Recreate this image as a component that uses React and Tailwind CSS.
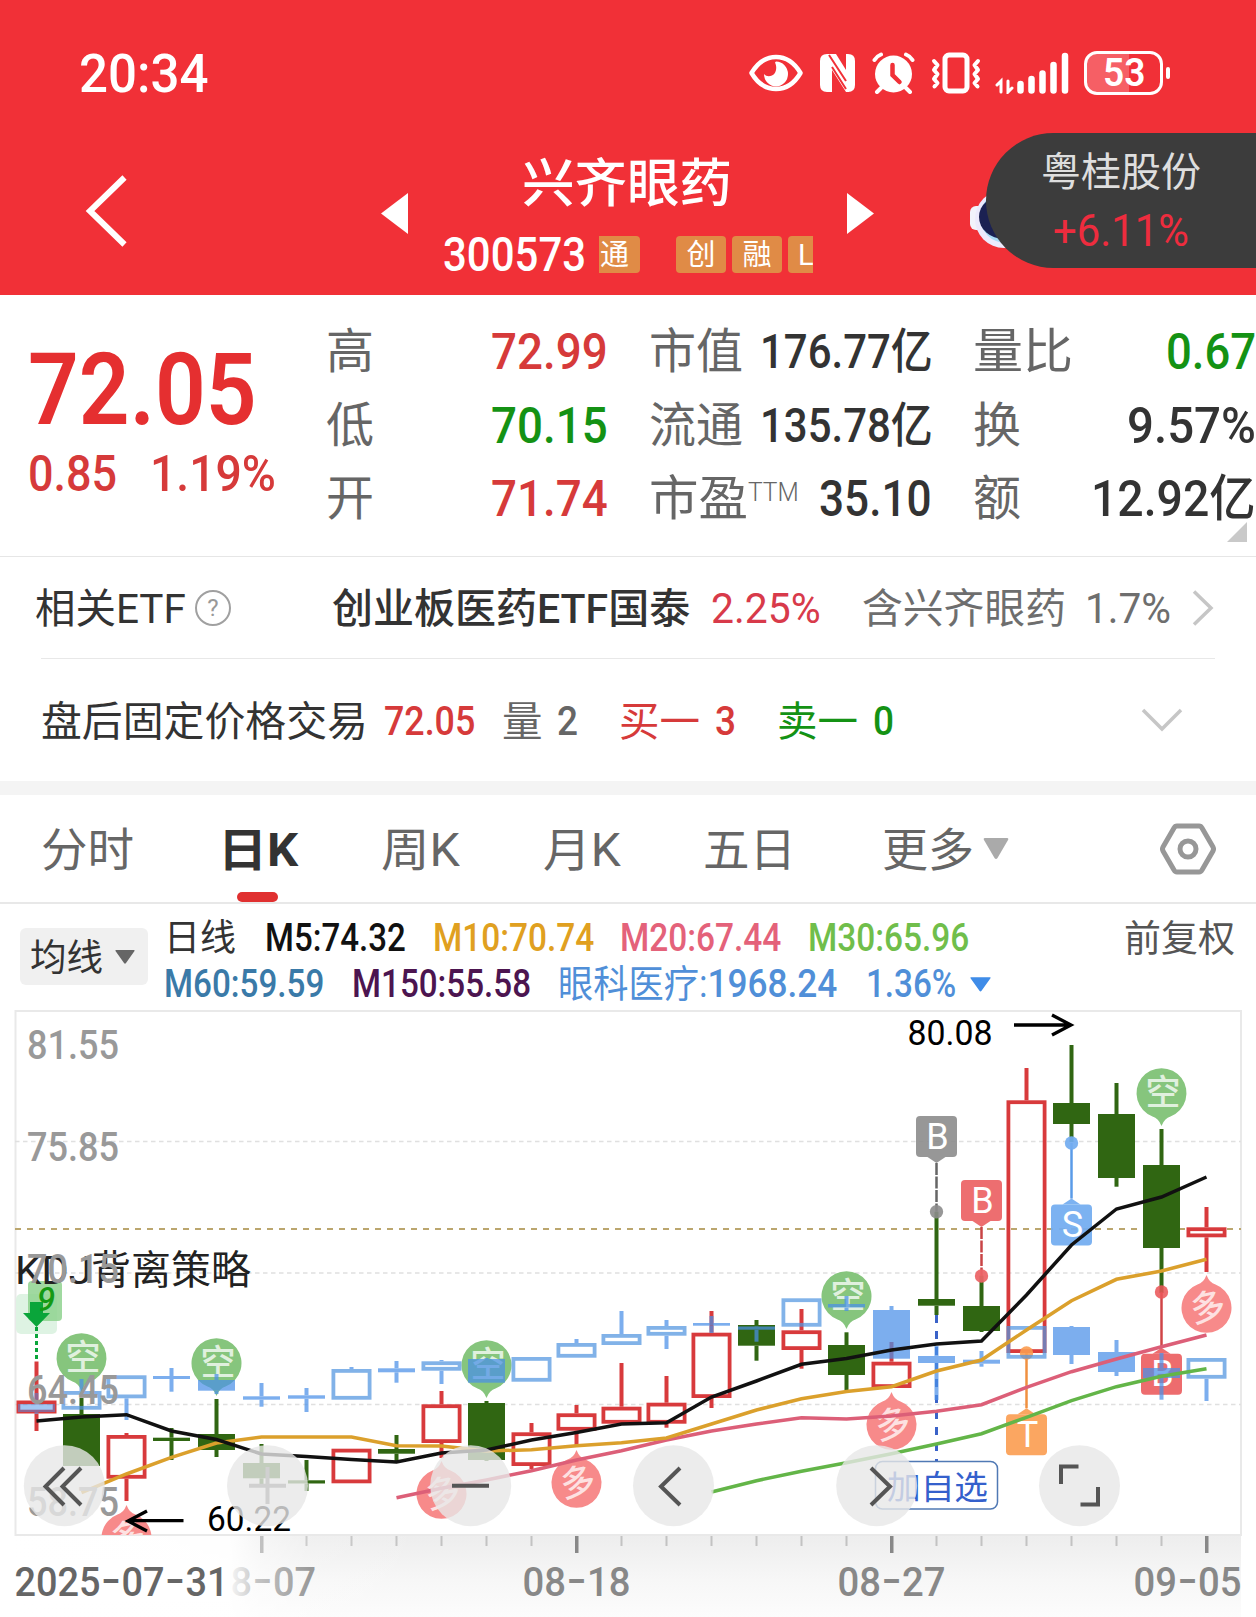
import React, { useLayoutEffect, useRef, useState } from 'react';

const FIRST_X = 36.5;
const STEP = 45;
const xAt = (i) => FIRST_X + i * STEP;

// kind, high, body top, body bottom, low (up = hollow, down = filled)
const CANDLES = [
  ['up', 1361.5, 1400.5, 1413.5, 1431],
  ['down', 1398, 1414, 1466, 1466],
  ['up', 1433, 1435, 1478.7, 1501],
  ['down', 1428, 1437.7, 1441, 1460],
  ['down', 1399, 1434, 1450, 1457],
  ['down', 1444, 1463, 1478.3, 1485],
  ['down', 1460, 1480.3, 1483.5, 1491],
  ['up', 1448.7, 1448.7, 1483.3, 1483.3],
  ['down', 1435, 1449, 1453.7, 1463],
  ['up', 1391, 1404.3, 1443, 1458],
  ['down', 1401, 1403, 1460, 1461],
  ['up', 1423, 1432.3, 1466, 1469],
  ['up', 1405, 1413.3, 1430.7, 1445],
  ['up', 1363, 1406.7, 1423.7, 1423.7],
  ['up', 1376, 1402.7, 1423.7, 1427.7],
  ['up', 1311, 1332.7, 1398, 1408],
  ['down', 1320, 1325, 1345.7, 1360.7],
  ['up', 1309, 1330.3, 1350, 1368.7],
  ['down', 1332.3, 1345, 1375, 1390],
  ['up', 1342, 1361.7, 1388, 1388],
  ['down', 1211.7, 1299, 1305.7, 1315],
  ['down', 1275.7, 1306, 1331, 1332],
  ['up', 1068, 1100.3, 1353, 1353],
  ['down', 1045, 1103, 1124, 1142],
  ['down', 1083, 1114, 1178, 1186.7],
  ['down', 1129, 1165, 1248, 1293],
  ['up', 1207, 1227.3, 1237.3, 1272],
];

// Sector index drawn over the main candles
const SECTOR = [
  ['down', 1393, 1404, 1412, 1414],
  ['up', 1379, 1391, 1409.7, 1409.7],
  ['up', 1375.3, 1375.3, 1398.3, 1420],
  ['down', 1368, 1376, 1379, 1391.7],
  ['down', 1374, 1380, 1390.7, 1394],
  ['down', 1383, 1396.3, 1399.7, 1406.7],
  ['down', 1388, 1395.3, 1398.7, 1412],
  ['up', 1367, 1369, 1399.7, 1399.7],
  ['down', 1361, 1368.3, 1372.3, 1382.7],
  ['up', 1360, 1361.3, 1370.7, 1384],
  ['down', 1358, 1359, 1382.7, 1382.7],
  ['up', 1357, 1357, 1381.7, 1381.7],
  ['up', 1339, 1343, 1357.7, 1357.7],
  ['up', 1311, 1334, 1345, 1345],
  ['up', 1320, 1326, 1335.7, 1349],
  ['down', 1316, 1323, 1325.7, 1333],
  ['down', 1326, 1326.5, 1329.7, 1341.7],
  ['up', 1298.3, 1298.3, 1326.7, 1326.7],
  ['down', 1296, 1304, 1307.5, 1311],
  ['down', 1306, 1310, 1358.7, 1358.7],
  ['down', 1346, 1356, 1363, 1400],
  ['down', 1351, 1359.7, 1363.7, 1366.7],
  ['up', 1326, 1326, 1358.7, 1358.7],
  ['down', 1326, 1327, 1355, 1364],
  ['down', 1340, 1352, 1372, 1376],
  ['down', 1353, 1368, 1378, 1399.7],
  ['up', 1358, 1358, 1378.7, 1401],
];

const AVERAGES = [
  { color: '#63b548', start: 15, ys: [1492, 1480.7, 1471.3, 1462.7, 1453.7, 1444, 1433.7, 1417.3, 1400.7, 1386.7, 1376.3, 1368.7] },
  { color: '#dc5f78', start: 8, ys: [1497.7, 1488.3, 1480, 1470.7, 1460, 1450.7, 1440, 1431, 1424, 1417.7, 1419, 1416, 1411.3, 1404.7, 1387.3, 1371.7, 1359, 1346.7, 1335] },
  { color: '#dba02c', start: 1, ys: [1492.7, 1474, 1457.3, 1443, 1437, 1437, 1437, 1445.7, 1446, 1451, 1449.7, 1445.7, 1442.7, 1438, 1424, 1410, 1398.7, 1391.5, 1386.7, 1371, 1360, 1330, 1300.7, 1279.3, 1271, 1259.3] },
  { color: '#111111', start: 0, ys: [1421, 1417, 1414.7, 1431, 1439.5, 1454, 1456.5, 1459.5, 1462, 1453, 1450, 1440, 1432.5, 1424, 1422.7, 1397, 1381, 1364.3, 1358.5, 1350, 1344, 1341, 1295, 1245, 1209, 1197, 1177] },
];

const PRICE_LABELS = [
  ['81.55', 1059],
  ['75.85', 1160.7],
  ['70.15', 1282.5],
  ['64.45', 1403.5],
  ['58.75', 1515.5],
];

const SHORT_PINS = [[1, 1358], [4, 1363], [10, 1365], [18, 1296], [25, 1093]];
const LONG_PINS = [[2, 1538], [9, 1494], [12, 1483], [19, 1425], [26, 1308]];

// Squeezes its text horizontally so that it fills the width given by the class
function Fit({ className = '', children }) {
  const outer = useRef(null);
  const inner = useRef(null);
  const [scale, setScale] = useState(1);

  useLayoutEffect(() => {
    setScale(outer.current.clientWidth / inner.current.offsetWidth);
  }, [children]);

  return (
    <span ref={outer} className={`block shrink-0 ${className}`}>
      <span ref={inner} className="inline-block origin-left whitespace-nowrap" style={{ transform: `scaleX(${scale})` }}>
        {children}
      </span>
    </span>
  );
}

function StatusBar() {
  return (
    <div className="flex h-[146px] items-center pl-[79px] text-white">
      <Fit className="mt-[2px] w-[129px] text-[53px] font-medium">20:34</Fit>
      {/* eye */}
      <svg className="ml-[541px] shrink-0" width="54" height="38" viewBox="0 0 54 38" fill="none">
        <path d="M2.500 19C9 8 17 3 27 3s18 5 24.500 16C45 30 37 35 27 35S9 30 2.500 19z" stroke="currentColor" strokeWidth="4.500" strokeLinejoin="round" />
        <path d="M27 7.500a12 12.500 0 1 1-12 12.500c3 3.500 8 2.500 10.500-.5 2.500-3.500 2-8 .5-11z" fill="currentColor" />
      </svg>
      {/* nfc */}
      <svg className="ml-4 shrink-0" width="37" height="40" viewBox="0 0 37 40">
        <path d="M8 1h3v38H8q-7 0-7-7V8q0-7 7-7zM27 1h2q7 0 7 7v24q0 7-7 7l-2-3z" fill="currentColor" />
        <path d="M10 1h7l10 16V2l3 4v33h-3L13 17v22h-3z" fill="currentColor" />
        <path d="M10 2l17 26M13 14l14 22" stroke="#f13037" strokeWidth="2" />
      </svg>
      {/* alarm */}
      <svg className="ml-4 shrink-0" width="43" height="42" viewBox="0 0 43 42" fill="none" stroke="currentColor" strokeLinecap="round">
        <circle cx="21.500" cy="22" r="18.500" fill="currentColor" stroke="none" />
        <path d="M2.500 8Q5 4 9 2.500M40.500 8Q38 4 34 2.500M9 36l-4 4M34 36l4 4" strokeWidth="4" />
        <path d="M20.500 13v10l7 7" stroke="#f13037" strokeWidth="4.500" />
      </svg>
      {/* vibrate */}
      <svg className="ml-4 shrink-0" width="50" height="42" viewBox="0 0 50 42" fill="none" stroke="currentColor" strokeLinecap="round" strokeLinejoin="round">
        <rect x="14" y="3" width="22" height="36" rx="4" strokeWidth="5" />
        <path d="M3 9l3.500 4L3 18l3.500 4L3 27l3.500 4-3 3.500M47 9l-3.500 4 3.500 5-3.500 4 3.500 5-3.500 4 3 3.500" strokeWidth="4" />
      </svg>
      {/* signal */}
      <svg className="ml-[14px] shrink-0" width="74" height="42" viewBox="0 0 74 42" fill="none" stroke="currentColor" strokeLinecap="round">
        <path d="M2 33l4-4v11M17 36l-4 4V29" strokeWidth="3" />
        <path d="M25.500 32v6.500M36.500 27v11.500M47.500 21.500v17M58.500 13v25.500M70 4v34.500" strokeWidth="6.500" />
      </svg>
      <div className="ml-[15px] flex h-[44px] w-[79px] shrink-0 items-center justify-center rounded-[13px] border-[3px] border-white bg-linear-to-r from-[#f65f65] from-58% to-[#f13037] to-58%">
        <Fit className="w-[42px] text-[38px] font-semibold">53</Fit>
      </div>
      <div className="ml-[3px] h-3 w-1 rounded-full bg-white" />
    </div>
  );
}

function TitleBar() {
  return (
    <div className="relative flex h-[149px] items-start text-white">
      <svg className="mt-[27px] ml-[85px] shrink-0" width="44" height="76" viewBox="0 0 44 76" fill="none">
        <path d="M39.500 4.500L5 38l34.500 33.500" stroke="currentColor" strokeWidth="6" />
      </svg>
      <svg className="mt-[47px] ml-[252px] shrink-0" width="27" height="41" viewBox="0 0 27 41">
        <path d="M27 0v41L0 20.500z" fill="currentColor" />
      </svg>
      <div className="ml-[35px] w-[370px] shrink-0">
        <div className="mt-[13px] pl-[79px] text-[52px] font-medium">
          <Fit className="w-[210px]">兴齐眼药</Fit>
        </div>
        <div className="mt-[25px] flex h-[37px] items-center text-[29px]">
          <Fit className="w-[143px] text-[49px] font-medium">300573</Fit>
          <span className="ml-[13px] flex h-full w-[41px] items-center overflow-hidden rounded-r-[4px] bg-[#e08b46] pt-[2px] pl-px">通</span>
          <span className="ml-[36px] flex h-full w-[50px] shrink-0 items-center justify-center rounded-[4px] bg-[#e08b46] pt-[2px]">创</span>
          <span className="ml-[6px] flex h-full w-[50px] shrink-0 items-center justify-center rounded-[4px] bg-[#e08b46] pt-[2px]">融</span>
          <span className="ml-[6px] flex h-full w-[25px] shrink-0 items-center overflow-hidden rounded-l-[4px] bg-[#e08b46] pt-[2px] pl-[10px]">L</span>
        </div>
      </div>
      <svg className="mt-[47px] ml-[34px] shrink-0" width="27" height="41" viewBox="0 0 27 41">
        <path d="M0 0v41l27-20.500z" fill="currentColor" />
      </svg>
      {/* assistant robot, half hidden by the floating quote */}
      <svg className="mt-[40px] ml-[96px] shrink-0" width="60" height="64" viewBox="0 0 60 64">
        <rect x="0" y="20" width="14" height="24" rx="6" fill="#f2f3fb" />
        <circle cx="34" cy="33" r="29" fill="#eceafc" />
        <circle cx="36" cy="31" r="26" fill="#a9dcf5" />
        <ellipse cx="34" cy="31" rx="25" ry="22" fill="#1b2152" />
      </svg>
      <div className="absolute top-[-13px] right-0 h-[135px] w-[270px] rounded-l-full bg-[#3c3c3c]">
        <Fit className="mt-[20px] ml-[55px] w-[160px] text-[40px] text-[#dedede]">粤桂股份</Fit>
        <Fit className="mt-[16px] ml-[67px] w-[136px] text-[44px] text-[#ee2c3e]">+6.11%</Fit>
      </div>
    </div>
  );
}

function Quote() {
  return (
    <div className="relative flex h-[262px] border-b border-[#e6e6e6] text-[50px] text-[#333]">
      <div className="w-[326px] shrink-0 pl-[28px] text-[#e52f30]">
        <Fit className="mt-[44px] w-[229px] text-[101px] font-semibold">72.05</Fit>
        <div className="mt-[9px] flex text-[#d63a3a]">
          <Fit className="w-[89px] font-medium">0.85</Fit>
          <Fit className="ml-[33px] w-[126px] font-medium">1.19%</Fit>
        </div>
      </div>
      <div className="w-[282px] shrink-0 pt-[31px]">
        <div className="flex justify-between">
          <span className="pt-[2px] text-[48px] text-[#666]">高</span>
          <Fit className="w-[117px] pt-px font-medium text-[#d63a3a]">72.99</Fit>
        </div>
        <div className="mt-[22.500px] flex justify-between">
          <span className="pt-[2px] text-[48px] text-[#666]">低</span>
          <Fit className="w-[117px] pt-px font-medium text-[#149214]">70.15</Fit>
        </div>
        <div className="mt-[22.500px] flex justify-between">
          <span className="pt-[2px] text-[48px] text-[#666]">开</span>
          <Fit className="w-[117px] pt-px font-medium text-[#d63a3a]">71.74</Fit>
        </div>
      </div>
      <div className="ml-[41px] w-[284px] shrink-0 pt-[32px]">
        <div className="flex h-[50px] items-center justify-between">
          <Fit className="w-[94px] text-[48px] text-[#666]">市值</Fit>
          <Fit className="w-[173px] text-[48px] font-medium">176.77亿</Fit>
        </div>
        <div className="mt-[23.500px] flex h-[50px] items-center justify-between">
          <Fit className="w-[94px] text-[48px] text-[#666]">流通</Fit>
          <Fit className="w-[173px] text-[48px] font-medium">135.78亿</Fit>
        </div>
        <div className="mt-[23.500px] flex h-[50px] items-center">
          <Fit className="w-[99px] text-[48px] text-[#666]">市盈</Fit>
          <Fit className="mb-[15px] w-[51px] text-[26px] font-light text-[#666]">TTM</Fit>
          <Fit className="ml-[20px] w-[113px] font-medium">35.10</Fit>
        </div>
      </div>
      <div className="ml-[40px] w-[283px] shrink-0 pt-[31px]">
        <div className="flex justify-between">
          <Fit className="w-[100px] pt-[2px] text-[48px] text-[#666]">量比</Fit>
          <Fit className="w-[90px] pt-px font-medium text-[#149214]">0.67</Fit>
        </div>
        <div className="mt-[22.500px] flex justify-between">
          <span className="pt-[2px] text-[48px] text-[#666]">换</span>
          <Fit className="w-[129px] pt-px font-medium">9.57%</Fit>
        </div>
        <div className="mt-[22.500px] flex justify-between">
          <span className="pt-[2px] text-[48px] text-[#666]">额</span>
          <Fit className="w-[165px] pt-px font-medium">12.92亿</Fit>
        </div>
      </div>
      <svg className="absolute right-[9px] bottom-[14px]" width="20" height="20" viewBox="0 0 20 20">
        <path d="M20 0v20H0z" fill="#c9c9c9" />
      </svg>
    </div>
  );
}

function EtfRow() {
  return (
    <div className="flex h-[101px] items-center text-[41px] text-[#333]">
      <Fit className="mt-1 ml-[35px] w-[151px]">相关ETF</Fit>
      <span className="ml-[9px] flex h-[36px] w-[36px] shrink-0 items-center justify-center rounded-full border-2 border-[#a0a0a0] text-[24px] text-[#999]">?</span>
      <Fit className="mt-1 ml-[101px] w-[358px] font-medium">创业板医药ETF国泰</Fit>
      <Fit className="mt-[2px] ml-[21px] w-[110px] text-[42px] text-[#d83a4a]">2.25%</Fit>
      <Fit className="mt-1 ml-[41px] w-[204px] text-[#6e6e6e]">含兴齐眼药</Fit>
      <Fit className="mt-[2px] ml-[19px] w-[86px] text-[42px] text-[#6e6e6e]">1.7%</Fit>
      <svg className="ml-[20px] shrink-0" width="24" height="38" viewBox="0 0 24 38" fill="none">
        <path d="M3 2.500L20 19 3 35.500" stroke="#c6c6c6" strokeWidth="3.500" />
      </svg>
    </div>
  );
}

function AfterHoursRow() {
  return (
    <div className="flex h-[122px] items-center text-[40.500px] text-[#333]">
      <Fit className="mt-1 ml-[41px] w-[327px]">盘后固定价格交易</Fit>
      <Fit className="mt-[3px] ml-[16px] w-[91px] font-medium text-[#d63a3a]">72.05</Fit>
      <Fit className="mt-1 ml-[27px] w-[41px] text-[#666]">量</Fit>
      <Fit className="mt-[3px] ml-[14px] w-[21px] font-medium text-[#666]">2</Fit>
      <Fit className="mt-1 ml-[41px] w-[81px] text-[#d63a3a]">买一</Fit>
      <Fit className="mt-[3px] ml-[15px] w-[21px] font-medium text-[#d63a3a]">3</Fit>
      <Fit className="mt-1 ml-[41px] w-[81px] text-[#149214]">卖一</Fit>
      <Fit className="mt-[3px] ml-[15px] w-[21px] font-medium text-[#149214]">0</Fit>
      <svg className="ml-[246px] shrink-0" width="44" height="26" viewBox="0 0 44 26" fill="none">
        <path d="M3 3l19 19L41 3" stroke="#c6c6c6" strokeWidth="3.500" />
      </svg>
    </div>
  );
}

function Tabs() {
  return (
    <div className="flex h-[109px] items-center border-b-2 border-[#e8e8e8] text-[46px] text-[#666]">
      <Fit className="mt-[3px] ml-[41px] w-[93px]">分时</Fit>
      <div className="relative ml-[84px]">
        <Fit className="mt-[3px] w-[80px] font-bold text-[#333]">日K</Fit>
        <div className="absolute top-[68px] left-[19px] h-[10px] w-[41px] rounded-full bg-[#e03030]" />
      </div>
      <Fit className="mt-[3px] ml-[83px] w-[79px]">周K</Fit>
      <Fit className="mt-[3px] ml-[83px] w-[78px]">月K</Fit>
      <Fit className="mt-[3px] ml-[82px] w-[93px]">五日</Fit>
      <Fit className="mt-[3px] ml-[86px] w-[92px]">更多</Fit>
      <svg className="ml-[9px] shrink-0" width="26" height="21" viewBox="0 0 26 21">
        <path d="M2 0h22q2 0 1 2L14.500 20q-1.500 2-3 0L1 2Q0 0 2 0z" fill="#aaa" />
      </svg>
      <svg className="ml-[151px] shrink-0" width="56" height="52" viewBox="0 0 56 52" fill="none" stroke="#979797" strokeWidth="5" strokeLinejoin="round">
        <path d="M17 3h22q2 0 3 2l11 19q1 2 0 4L42 47q-1 2-3 2H17q-2 0-3-2L3 28q-1-2 0-4L14 5q1-2 3-2z" />
        <circle cx="28" cy="26" r="8" />
      </svg>
    </div>
  );
}

function Legend() {
  return (
    <div className="flex h-[101px] text-[38px]">
      <div className="mt-[24px] ml-[20px] flex h-[57px] w-[128px] shrink-0 items-center rounded-[6px] bg-[#f0f0f0]">
        <Fit className="mt-[4px] ml-[10px] w-[73px] text-[37px] text-[#333]">均线</Fit>
        <svg className="ml-[12px] shrink-0" width="20" height="14" viewBox="0 0 20 14">
          <path d="M1 0h18q1 0 .5 1L11 13q-1 1.500-2 0L.5 1Q0 0 1 0z" fill="#666" />
        </svg>
      </div>
      <div className="mt-[14px] ml-[16px] w-[880px] shrink-0">
        <div className="flex">
          <Fit className="mt-[2px] w-[72px] text-[37px] text-[#333]">日线</Fit>
          <Fit className="mt-px ml-[29px] w-[141px] font-medium text-[#111]">M5:74.32</Fit>
          <Fit className="mt-px ml-[27px] w-[161px] font-medium text-[#e0a020]">M10:70.74</Fit>
          <Fit className="mt-px ml-[26px] w-[161px] font-medium text-[#e4627a]">M20:67.44</Fit>
          <Fit className="mt-px ml-[27px] w-[161px] font-medium text-[#70be4b]">M30:65.96</Fit>
        </div>
        <div className="mt-[8px] flex">
          <Fit className="w-[160px] font-medium text-[#3a7aa8]">M60:59.59</Fit>
          <Fit className="ml-[28px] w-[179px] font-medium text-[#4c1550]">M150:55.58</Fit>
          <Fit className="ml-[27px] w-[279px] text-[#508fd8]">眼科医疗:<span className="font-medium">1968.24</span></Fit>
          <Fit className="ml-[29px] w-[90px] font-medium text-[#508fd8]">1.36%</Fit>
          <svg className="mt-[12px] ml-[14px] shrink-0" width="21" height="15" viewBox="0 0 20 14">
            <path d="M1 0h18q1 0 .5 1L11 13q-1 1.500-2 0L.5 1Q0 0 1 0z" fill="#3f8ce8" />
          </svg>
        </div>
      </div>
      <Fit className="mt-[17px] ml-[80px] w-[111px] text-[37px] text-[#555]">前复权</Fit>
    </div>
  );
}

function Candle({ x, data, color, line }) {
  const [kind, high, top, bottom, low] = data;
  const t = 3.8;
  return (
    <g>
      {high < top && <rect x={x - 2} y={high} width="4" height={top - high} fill={color} />}
      {low > bottom && <rect x={x - 2} y={bottom} width="4" height={low - bottom} fill={color} />}
      {kind === 'up' ? (
        <rect x={x - 20 + t / 2} y={top + t / 2} width={40 - t} height={Math.max(bottom - top - t, 1)} fill="none" stroke={line} strokeWidth={t} />
      ) : (
        <rect x={x - 18.5} y={top} width="37" height={bottom - top} fill={color} />
      )}
    </g>
  );
}

function Pin({ x, y, label, color, up }) {
  const d = up
    ? `M${x} ${y - 33}q3 8 9 9.500a25 25 0 1 1 -18 0q6 -1.500 9 -9.500z`
    : `M${x} ${y + 33}q-3 -8 -9 -9.500a25 25 0 1 1 18 0q-6 1.500 -9 9.500z`;
  return (
    <g>
      <path d={d} fill={color} />
      <text x={x + 1.5} y={y + 12} textAnchor="middle" fontSize="35" fontWeight="500" fill="#fff" fillOpacity="0.75" transform={up ? `rotate(-12 ${x} ${y})` : undefined}>
        {label}
      </text>
    </g>
  );
}

// Trade marker: a square tag tied to its dot by a thin line
function Marker({ x, y, dot, label, color, stem, dashed }) {
  const below = dot > y;
  const edge = below ? y + 41 : y;
  const tip = below ? y + 47 : y - 6;
  return (
    <g>
      <path d={`M${x} ${tip}V${dot}`} stroke={stem} strokeWidth="2.5" strokeDasharray={dashed ? '12 1.5' : undefined} />
      <circle cx={x} cy={dot} r="6.700" fill={color} />
      <path d={`M${x - 9} ${edge}L${x} ${tip}l9 ${edge - tip}z`} fill={color} />
      <rect x={x - 20.5} y={y} width="41" height="41" rx="4" fill={color} />
      <text x={x + 1} y={y + 32.5} textAnchor="middle" fontSize="36" fill="#fff">{label}</text>
    </g>
  );
}

function DateLabel({ x, width, fill, parts }) {
  return (
    <text x={x} y="1595.7" fontSize="40" fontWeight="500" fill={fill} textLength={width} lengthAdjust="spacingAndGlyphs">
      {parts.map((part, i) => (
        <React.Fragment key={i}>
          {i > 0 && <tspan fontFamily="Inter" fontWeight="400" fontSize="48">-</tspan>}
          {part}
        </React.Fragment>
      ))}
    </text>
  );
}

function RoundButton({ x, children }) {
  return (
    <g>
      <circle cx={x} cy="1485.700" r="40.500" fill="#e7e7e7" fillOpacity="0.8" />
      <g fill="none" stroke="#555" strokeWidth="4">{children}</g>
    </g>
  );
}

function Chart() {
  return (
    <svg className="block" width="1256" height="612" viewBox="0 1005 1256 612">
      <defs>
        <linearGradient id="axisFade" x1="0" y1="0" x2="0" y2="1">
          <stop offset="0" stopColor="#ededed" />
          <stop offset="0.55" stopColor="#f7f7f7" />
          <stop offset="1" stopColor="#fcfcfc" />
        </linearGradient>
        <linearGradient id="leftFade" gradientUnits="userSpaceOnUse" x1="0" y1="0" x2="430" y2="0">
          <stop offset="0" stopColor="#fff" />
          <stop offset="0.53" stopColor="#fff" stopOpacity="0.96" />
          <stop offset="0.6" stopColor="#fff" stopOpacity="0.5" />
          <stop offset="0.72" stopColor="#fff" stopOpacity="0.15" />
          <stop offset="1" stopColor="#fff" stopOpacity="0" />
        </linearGradient>
        <clipPath id="plot">
          <rect x="15" y="1011" width="1226" height="524" />
        </clipPath>
      </defs>

      {/* axis strip */}
      <rect x="15" y="1535" width="1226" height="82" fill="url(#axisFade)" />
      {CANDLES.map((_, i) => {
        if (i < 5) return null;
        const major = i % 7 === 5;
        return <rect key={i} x={xAt(i) - (major ? 1.5 : 1)} y="1536" width={major ? 3.5 : 2} height={major ? 17 : 10} fill={major ? '#888' : '#c2c2c2'} />;
      })}
      <DateLabel x={209} width={107} fill="#888" parts={['08', '07']} />
      <rect x="0" y="1536" width="430" height="81" fill="url(#leftFade)" />
      <rect x="15" y="1560" width="215" height="42" fill="#fff" />
      <DateLabel x={14.5} width={214} fill="#666" parts={['2025', '07', '31']} />
      <DateLabel x={522.5} width={108} fill="#888" parts={['08', '18']} />
      <DateLabel x={837.5} width={108} fill="#888" parts={['08', '27']} />
      <DateLabel x={1133.5} width={108} fill="#888" parts={['09', '05']} />

      {/* frame and grid */}
      <rect x="15.500" y="1011" width="1225.500" height="524" fill="none" stroke="#e9e9e9" strokeWidth="2" />
      {[1141.5, 1273, 1404.5].map((y) => (
        <path key={y} d={`M15 ${y}H1241`} stroke="#e0e0e0" strokeWidth="1.500" strokeDasharray="4.500 3.500" />
      ))}
      <path d="M15 1229H1241" stroke="#bba66e" strokeWidth="2" strokeDasharray="6 6" />

      <g clipPath="url(#plot)">
        {SHORT_PINS.map(([i, y]) => (
          <Pin key={i} x={xAt(i)} y={y} label="空" color="#86c57d" />
        ))}
        {LONG_PINS.map(([i, y]) => (
          <Pin key={i} x={xAt(i)} y={y} label="多" color="#f78a8a" up />
        ))}

        {/* strategy signal on the first candle */}
        <rect x="16" y="1294" width="41" height="40" rx="5" fill="#def3e3" />
        <rect x="28" y="1281" width="34" height="40" rx="4" fill="#8fd28f" fillOpacity="0.85" />
        <path d="M30 1302h13v11h7l-13.500 14-13.500-14h7z" fill="#0aa53a" />
        <path d="M36.500 1327v34" stroke="#0aa53a" strokeWidth="3" strokeDasharray="4 3" />
        <text x="37" y="1311" fontSize="33" fontWeight="500" fontStyle="italic" fill="#149a14">9</text>

        {CANDLES.map((c, i) => (
          <Candle key={i} x={xAt(i)} data={c} color={c[0] === 'up' ? '#d83a3c' : '#306612'} line="#d83a3c" />
        ))}

        <Marker x={xAt(20)} y={1116} dot={1211.7} label="B" color="#8c8c8ce6" stem="#666" dashed />
        <Marker x={xAt(21)} y={1180} dot={1276} label="B" color="#ec6466ee" stem="#c94446" dashed />
        <Marker x={xAt(23)} y={1204.6} dot={1143} label="S" color="#73acf0ee" stem="#5a9be8" />
        <Marker x={xAt(22)} y={1414.3} dot={1353} label="T" color="#fb9c50e6" stem="#f09040" />
        <Marker x={xAt(25)} y={1353.7} dot={1292} label="B" color="#ea5558dd" stem="#d04446" />

        {/* date on which the stock was added to the watch list */}
        <path d="M936.500 1315V1461" stroke="#3a62c8" strokeWidth="3" strokeDasharray="8 8" />
        <rect x="875.500" y="1461.500" width="122" height="47.500" rx="7" fill="#fff" stroke="#5079b4" strokeWidth="1.500" />
        <text x="887" y="1498.500" fontSize="33" fill="#3460cc" textLength="101" lengthAdjust="spacingAndGlyphs">加自选</text>

        {SECTOR.map((c, i) => (
          <g key={i} opacity={i === 0 ? 0.5 : 0.72}>
            <Candle x={xAt(i)} data={c} color="#4a90e8" line="#5295e0" />
          </g>
        ))}

        {AVERAGES.map(({ color, start, ys }) => (
          <polyline key={color} points={ys.map((y, i) => `${xAt(start + i)},${y}`).join(' ')} fill="none" stroke={color} strokeWidth="3.500" />
        ))}
      </g>

      <text x="15" y="1283.500" fontSize="39.500" fill="#222" textLength="77" lengthAdjust="spacingAndGlyphs">KDJ</text>
      <text x="91" y="1283.500" fontSize="39.500" fill="#222" textLength="160" lengthAdjust="spacingAndGlyphs">背离策略</text>
      {PRICE_LABELS.map(([label, y]) => (
        <text key={label} x="27" y={y} fontSize="41" fontWeight="500" fill="#999" textLength="92" lengthAdjust="spacingAndGlyphs">{label}</text>
      ))}

      <text x="907.500" y="1045" fontSize="35" fill="#000" textLength="85" lengthAdjust="spacingAndGlyphs">80.08</text>
      <path d="M1014 1025H1071M1052 1015l19 10-19 10" fill="none" stroke="#000" strokeWidth="3.300" />
      <text x="207" y="1530.500" fontSize="35" fill="#000" textLength="84" lengthAdjust="spacingAndGlyphs">60.22</text>
      <path d="M183.500 1520.700H128M147 1511l-19 10 19 10" fill="none" stroke="#000" strokeWidth="3.300" />

      <RoundButton x={64.3}>
        <path d="M64 1468l-18.500 18.500L64 1505M81 1468l-18.500 18.500L81 1505" />
      </RoundButton>
      <RoundButton x={267.5}>
        <path d="M249 1485.700h37M267.500 1467v37" stroke="#d0d0d0" />
      </RoundButton>
      <RoundButton x={470.7}>
        <path d="M452 1485.700h37" />
      </RoundButton>
      <RoundButton x={673.5}>
        <path d="M680 1468l-19 18.500 19 18.500" />
      </RoundButton>
      <RoundButton x={876.7}>
        <path d="M871 1468l19 18.500-19 18.500" />
      </RoundButton>
      <RoundButton x={1079.5}>
        <path d="M1061 1484v-17.500h17.500M1098 1487v17.500h-17.500" />
      </RoundButton>
    </svg>
  );
}

export default function App() {
  return (
    <div className="h-[1617px] w-[1256px] overflow-hidden bg-white font-[Roboto,'Noto_Sans_CJK_SC',sans-serif] leading-none">
      <header className="h-[295px] bg-[#f13037]">
        <StatusBar />
        <TitleBar />
      </header>
      <Quote />
      <EtfRow />
      <div className="mx-[41px] h-px bg-[#e8e8e8]" />
      <AfterHoursRow />
      <div className="h-[14px] bg-[#f4f4f4]" />
      <Tabs />
      <Legend />
      <Chart />
    </div>
  );
}
